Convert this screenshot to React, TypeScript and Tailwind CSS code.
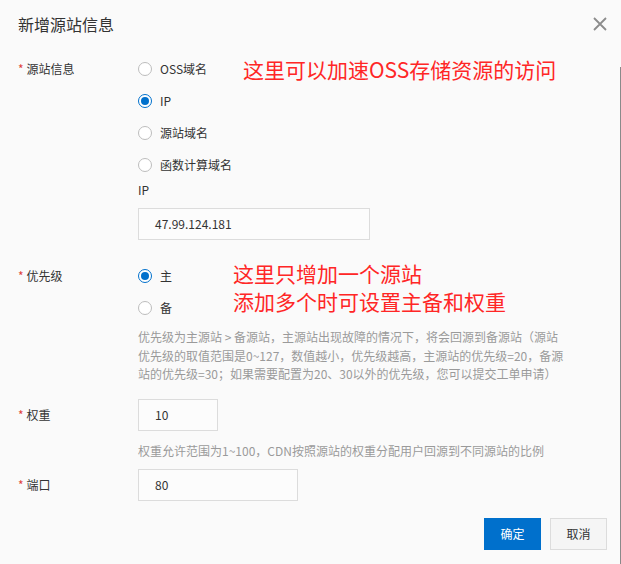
const font = { fontFamily: '"Noto Sans CJK SC", "Liberation Sans", sans-serif' };

function Radio({ checked, label }: { checked?: boolean; label: string }) {
  return (
    <div className="h-8 flex items-center">
      <span
        className={`h-[14px] w-[14px] rounded-full border flex items-center justify-center bg-white ${
          checked ? "border-[#0070cc]" : "border-[#bdbdbd]"
        }`}
      >
        {checked && <span className="h-[8px] w-[8px] rounded-full bg-[#0070cc]" />}
      </span>
      <span className="ml-[8px] text-[12px] text-[#333]">{label}</span>
    </div>
  );
}

function Label({ text }: { text: string }) {
  return (
    <div className="w-[120px] shrink-0 h-8 flex items-center text-[12px] text-[#333]">
      <span className="text-[#e0423a] mr-[3px]">*</span>
      {text}
    </div>
  );
}

function Input({ value, w }: { value: string; w: string }) {
  return (
    <div className={`${w} h-8 border border-[#dcdcdc] bg-[#fcfcfc] flex items-center pl-[16px] text-[12px] text-[#333]`}>
      {value}
    </div>
  );
}

export default function App() {
  return (
    <div style={font} className="relative w-[621px] h-[564px] bg-[#fafafa] overflow-hidden">
      <div className="absolute right-0 top-[67px] bottom-0 w-px bg-[#8a8a8a]" />
      <div className="h-[48px] flex items-center justify-between pl-[18px] pr-[14px]">
        <span className="text-[16px] text-[#333]">新增源站信息</span>
        <svg width="14" height="14" viewBox="0 0 14 14" className="text-[#8c8c8c]">
          <path d="M1 1L13 13M13 1L1 13" stroke="currentColor" strokeWidth="1.8" />
        </svg>
      </div>

      <div className="pl-[18px] pt-[5px]">
        <div className="flex">
          <Label text="源站信息" />
          <div className="flex flex-col">
            <div className="flex">
              <div className="w-[105px]">
                <Radio label="OSS域名" />
                <Radio checked label="IP" />
                <Radio label="源站域名" />
                <Radio label="函数计算域名" />
              </div>
              <div className="text-[21px] leading-8 text-[#ff2626]">这里可以加速OSS存储资源的访问</div>
            </div>
            <div className="h-[18px] leading-[18px] text-[12px] text-[#333]">IP</div>
            <div className="mt-[9px]">
              <Input value="47.99.124.181" w="w-[232px]" />
            </div>
          </div>
        </div>

        <div className="flex mt-[20px]">
          <Label text="优先级" />
          <div className="flex flex-col">
            <div className="flex">
              <div className="w-[95px]">
                <Radio checked label="主" />
                <Radio label="备" />
              </div>
              <div className="text-[21px] leading-[28px] text-[#ff2626] -mt-[1px]">
                <div>这里只增加一个源站</div>
                <div>添加多个时可设置主备和权重</div>
              </div>
            </div>
            <div className="mt-[4px] text-[12px] leading-[18.5px] text-[#9a9a9a] whitespace-nowrap">
              <div>优先级为主源站 &gt; 备源站，主源站出现故障的情况下，将会回源到备源站（源站</div>
              <div>优先级的取值范围是0~127，数值越小，优先级越高，主源站的优先级=20，备源</div>
              <div>站的优先级=30；如果需要配置为20、30以外的优先级，您可以提交工单申请）</div>
            </div>
          </div>
        </div>

        <div className="flex mt-[15px]">
          <Label text="权重" />
          <div className="flex flex-col">
            <Input value="10" w="w-[80px]" />
            <div className="mt-[11px] text-[12px] leading-[18px] text-[#9a9a9a] whitespace-nowrap">
              权重允许范围为1~100，CDN按照源站的权重分配用户回源到不同源站的比例
            </div>
          </div>
        </div>

        <div className="flex mt-[9px]">
          <Label text="端口" />
          <Input value="80" w="w-[160px]" />
        </div>
      </div>

      <div className="flex justify-end gap-[9px] pr-[14px] mt-[17px]">
        <div className="w-[57px] h-8 bg-[#0070cc] text-white text-[12px] flex items-center justify-center">确定</div>
        <div className="w-[57px] h-8 bg-[#f5f5f5] border border-[#dcdcdc] text-[#333] text-[12px] flex items-center justify-center">取消</div>
      </div>
    </div>
  );
}
